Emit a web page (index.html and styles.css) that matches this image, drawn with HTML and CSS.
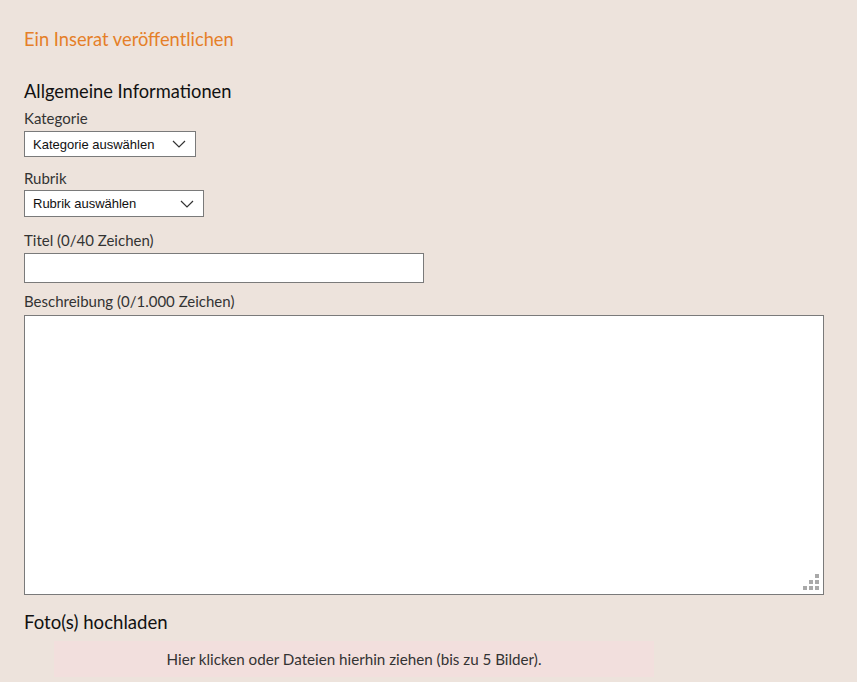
FILE: index.html
```html
<!DOCTYPE html>
<html lang="de">
<head>
<meta charset="utf-8">
<title>Ein Inserat veröffentlichen</title>
<link rel="stylesheet" href="styles.css">
</head>
<body>
<main class="page">
  <h1 class="page-title">Ein Inserat veröffentlichen</h1>
  <h2 class="section-title">Allgemeine Informationen</h2>

  <label class="field-label first">Kategorie</label>
  <div class="select select-kat">
    <span>Kategorie auswählen</span>
    <svg class="chev" width="14" height="8" viewBox="0 0 14 8"><path d="M1 1 L7 7 L13 1" fill="none" stroke="#333" stroke-width="1.2"/></svg>
  </div>

  <label class="field-label">Rubrik</label>
  <div class="select select-rub">
    <span>Rubrik auswählen</span>
    <svg class="chev" width="14" height="8" viewBox="0 0 14 8"><path d="M1 1 L7 7 L13 1" fill="none" stroke="#333" stroke-width="1.2"/></svg>
  </div>

  <label class="field-label">Titel (0/40 Zeichen)</label>
  <div class="input-title"></div>

  <label class="field-label">Beschreibung (0/1.000 Zeichen)</label>
  <div class="textarea">
    <svg class="grip" width="16" height="16" viewBox="0 0 16 16">
      <rect x="12" y="0" width="4" height="4" fill="#a9a9a9"/>
      <rect x="6" y="6" width="4" height="4" fill="#a9a9a9"/>
      <rect x="12" y="6" width="4" height="4" fill="#a9a9a9"/>
      <rect x="0" y="12" width="4" height="4" fill="#a9a9a9"/>
      <rect x="6" y="12" width="4" height="4" fill="#a9a9a9"/>
      <rect x="12" y="12" width="4" height="4" fill="#a9a9a9"/>
    </svg>
  </div>

  <h2 class="upload-title">Foto(s) hochladen</h2>
  <div class="dropzone">Hier klicken oder Dateien hierhin ziehen (bis zu 5 Bilder).</div>
</main>
</body>
</html>
```
FILE: styles.css
```css
html, body {
  margin: 0;
  padding: 0;
  background: #ede3dc;
  height: 100%;
  overflow: hidden;
}
body {
  font-family: "Lato", "Open Sans", sans-serif;
  color: #222;
}
.page {
  padding: 28px 0 0 24px;
  display: flex;
  flex-direction: column;
  align-items: flex-start;
}
.page-title {
  margin: 0;
  font-size: 18.3px;
  font-weight: 400;
  color: #e57f28;
  line-height: 22px;
}
.section-title {
  margin: 30px 0 0 0;
  font-size: 18.3px;
  font-weight: 400;
  line-height: 22px;
  color: #111;
}
.field-label {
  font-size: 15px;
  line-height: 20px;
  color: #333;
  margin: 0 0 3px 0;
}
.field-label.first { margin-top: 6px; }
.select {
  box-sizing: border-box;
  height: 27px;
  background: #fff;
  border: 1px solid #7a7a7a;
  display: flex;
  align-items: center;
  justify-content: space-between;
  padding: 0 9px 0 8px;
  font-family: "Liberation Sans", Arial, sans-serif;
  font-size: 13px;
  color: #111;
}
.select-kat { width: 172px; height: 26px; margin-bottom: 11px; }
.select-rub { width: 180px; margin-bottom: 13px; margin-top: -1px; }
.input-title {
  box-sizing: border-box;
  width: 400px;
  height: 30px;
  background: #fff;
  border: 1px solid #7a7a7a;
  margin-bottom: 8px;
}
.textarea {
  box-sizing: border-box;
  width: 800px;
  height: 280px;
  background: #fff;
  border: 1px solid #7a7a7a;
  position: relative;
  margin-top: 1px;
}
.grip {
  position: absolute;
  right: 4px;
  bottom: 4px;
}
.upload-title {
  margin: 16px 0 0 0;
  font-size: 18.6px;
  font-weight: 400;
  line-height: 22px;
  color: #111;
}
.dropzone {
  box-sizing: border-box;
  margin: 8px 0 0 30px;
  width: 600px;
  height: 36px;
  background: #f2dfdd;
  display: flex;
  align-items: center;
  justify-content: center;
  font-size: 15.2px;
  color: #333;
}
```
